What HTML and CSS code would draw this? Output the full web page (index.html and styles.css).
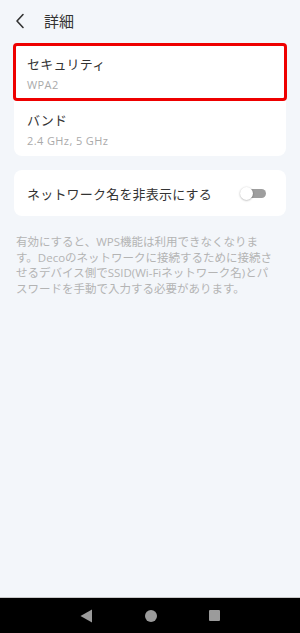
FILE: index.html
```html
<!DOCTYPE html>
<html lang="ja">
<head>
<meta charset="utf-8">
<title>詳細</title>
<link rel="stylesheet" href="styles.css">
</head>
<body>
<div class="screen">
  <header class="header">
    <svg class="back" width="10" height="16" viewBox="0 0 10 16"><path d="M8 1.5 L2 8 L8 14.5" fill="none" stroke="#333" stroke-width="1.6" stroke-linecap="round" stroke-linejoin="round"/></svg>
    <h1 class="title">詳細</h1>
  </header>
  <main class="main">
    <section class="card">
      <div class="row row-highlight">
        <div class="row-title">セキュリティ</div>
        <div class="row-sub">WPA2</div>
        <div class="highlight"></div>
      </div>
      <div class="row">
        <div class="row-title">バンド</div>
        <div class="row-sub">2.4 GHz, 5 GHz</div>
      </div>
    </section>
    <section class="card card-toggle">
      <div class="toggle-label">ネットワーク名を非表示にする</div>
      <div class="toggle"><span class="track"></span><span class="knob"></span></div>
    </section>
    <p class="desc">有効にすると、WPS機能は利用できなくなりま<br>す。Decoのネットワークに接続するために接続さ<br>せるデバイス側でSSID(Wi-Fiネットワーク名)とパ<br>スワードを手動で入力する必要があります。</p>
  </main>
  <nav class="navbar">
    <svg width="13" height="14" viewBox="0 0 13 14"><path d="M12 0.5 L12 13.5 L0.5 7 Z" fill="#9b9b9b"/></svg>
    <span class="nav-circle"></span>
    <span class="nav-square"></span>
  </nav>
</div>
</body>
</html>
```
FILE: styles.css
```css
* { box-sizing: border-box; }
html, body { margin: 0; padding: 0; }
body {
  font-family: "Open Sans", "Noto Sans CJK JP", sans-serif;
  background: #f3f6fa;
}
.screen {
  width: 300px;
  height: 633px;
  display: flex;
  flex-direction: column;
  background: #f3f6fa;
}
.header {
  height: 42px;
  display: flex;
  align-items: center;
  padding-left: 15px;
  flex-shrink: 0;
}
.back { display: block; }
.title {
  margin: 0 0 0 19px;
  font-size: 15px;
  font-weight: 400;
  color: #333;
  line-height: 20px;
}
.main {
  flex: 1;
  padding: 2px 14px 0;
}
.card {
  background: #fff;
  border-radius: 8px;
}
.row {
  position: relative;
  height: 56px;
  padding: 11px 13px 0;
}
.row-title {
  font-size: 13px;
  letter-spacing: 0.2px;
  line-height: 18px;
  color: #333;
}
.row-sub {
  margin-top: 5px;
  font-size: 11px;
  letter-spacing: 0.4px;
  line-height: 14px;
  color: #aaa;
}
.highlight {
  position: absolute;
  top: -1px;
  left: -1px;
  right: -1px;
  bottom: -1px;
  border: 3px solid #ee0000;
  border-radius: 4px;
}
.card-toggle {
  margin-top: 14px;
  height: 46px;
  display: flex;
  align-items: center;
  justify-content: space-between;
  padding: 0 20px 0 13px;
}
.toggle-label {
  font-size: 13px;
  letter-spacing: 0.2px;
  color: #333;
  line-height: 18px;
  padding-top: 1px;
}
.toggle {
  position: relative;
  width: 26px;
  height: 14px;
}
.track {
  position: absolute;
  left: 3px;
  right: 0;
  top: 3px;
  height: 9px;
  border-radius: 5px;
  background: #9e9e9e;
}
.knob {
  position: absolute;
  left: 0;
  top: 1px;
  width: 13px;
  height: 13px;
  border-radius: 50%;
  background: #fff;
  box-shadow: 0 0.5px 2px rgba(0,0,0,0.35);
}
.desc {
  margin: 18px 0 0;
  padding: 0 0 0 2px;
  font-size: 11.5px;
  line-height: 15.5px;
  color: #b4b4b4;
  white-space: nowrap;
}
.navbar {
  height: 36px;
  flex-shrink: 0;
  background: #000;
  border-top: 1px solid #c8c8c8;
  display: flex;
  align-items: center;
  justify-content: space-around;
  padding: 0 54px;
}
.nav-circle {
  width: 12px;
  height: 12px;
  border-radius: 50%;
  background: #9b9b9b;
}
.nav-square {
  width: 11px;
  height: 11px;
  background: #9b9b9b;
  border-radius: 1px;
}
```
